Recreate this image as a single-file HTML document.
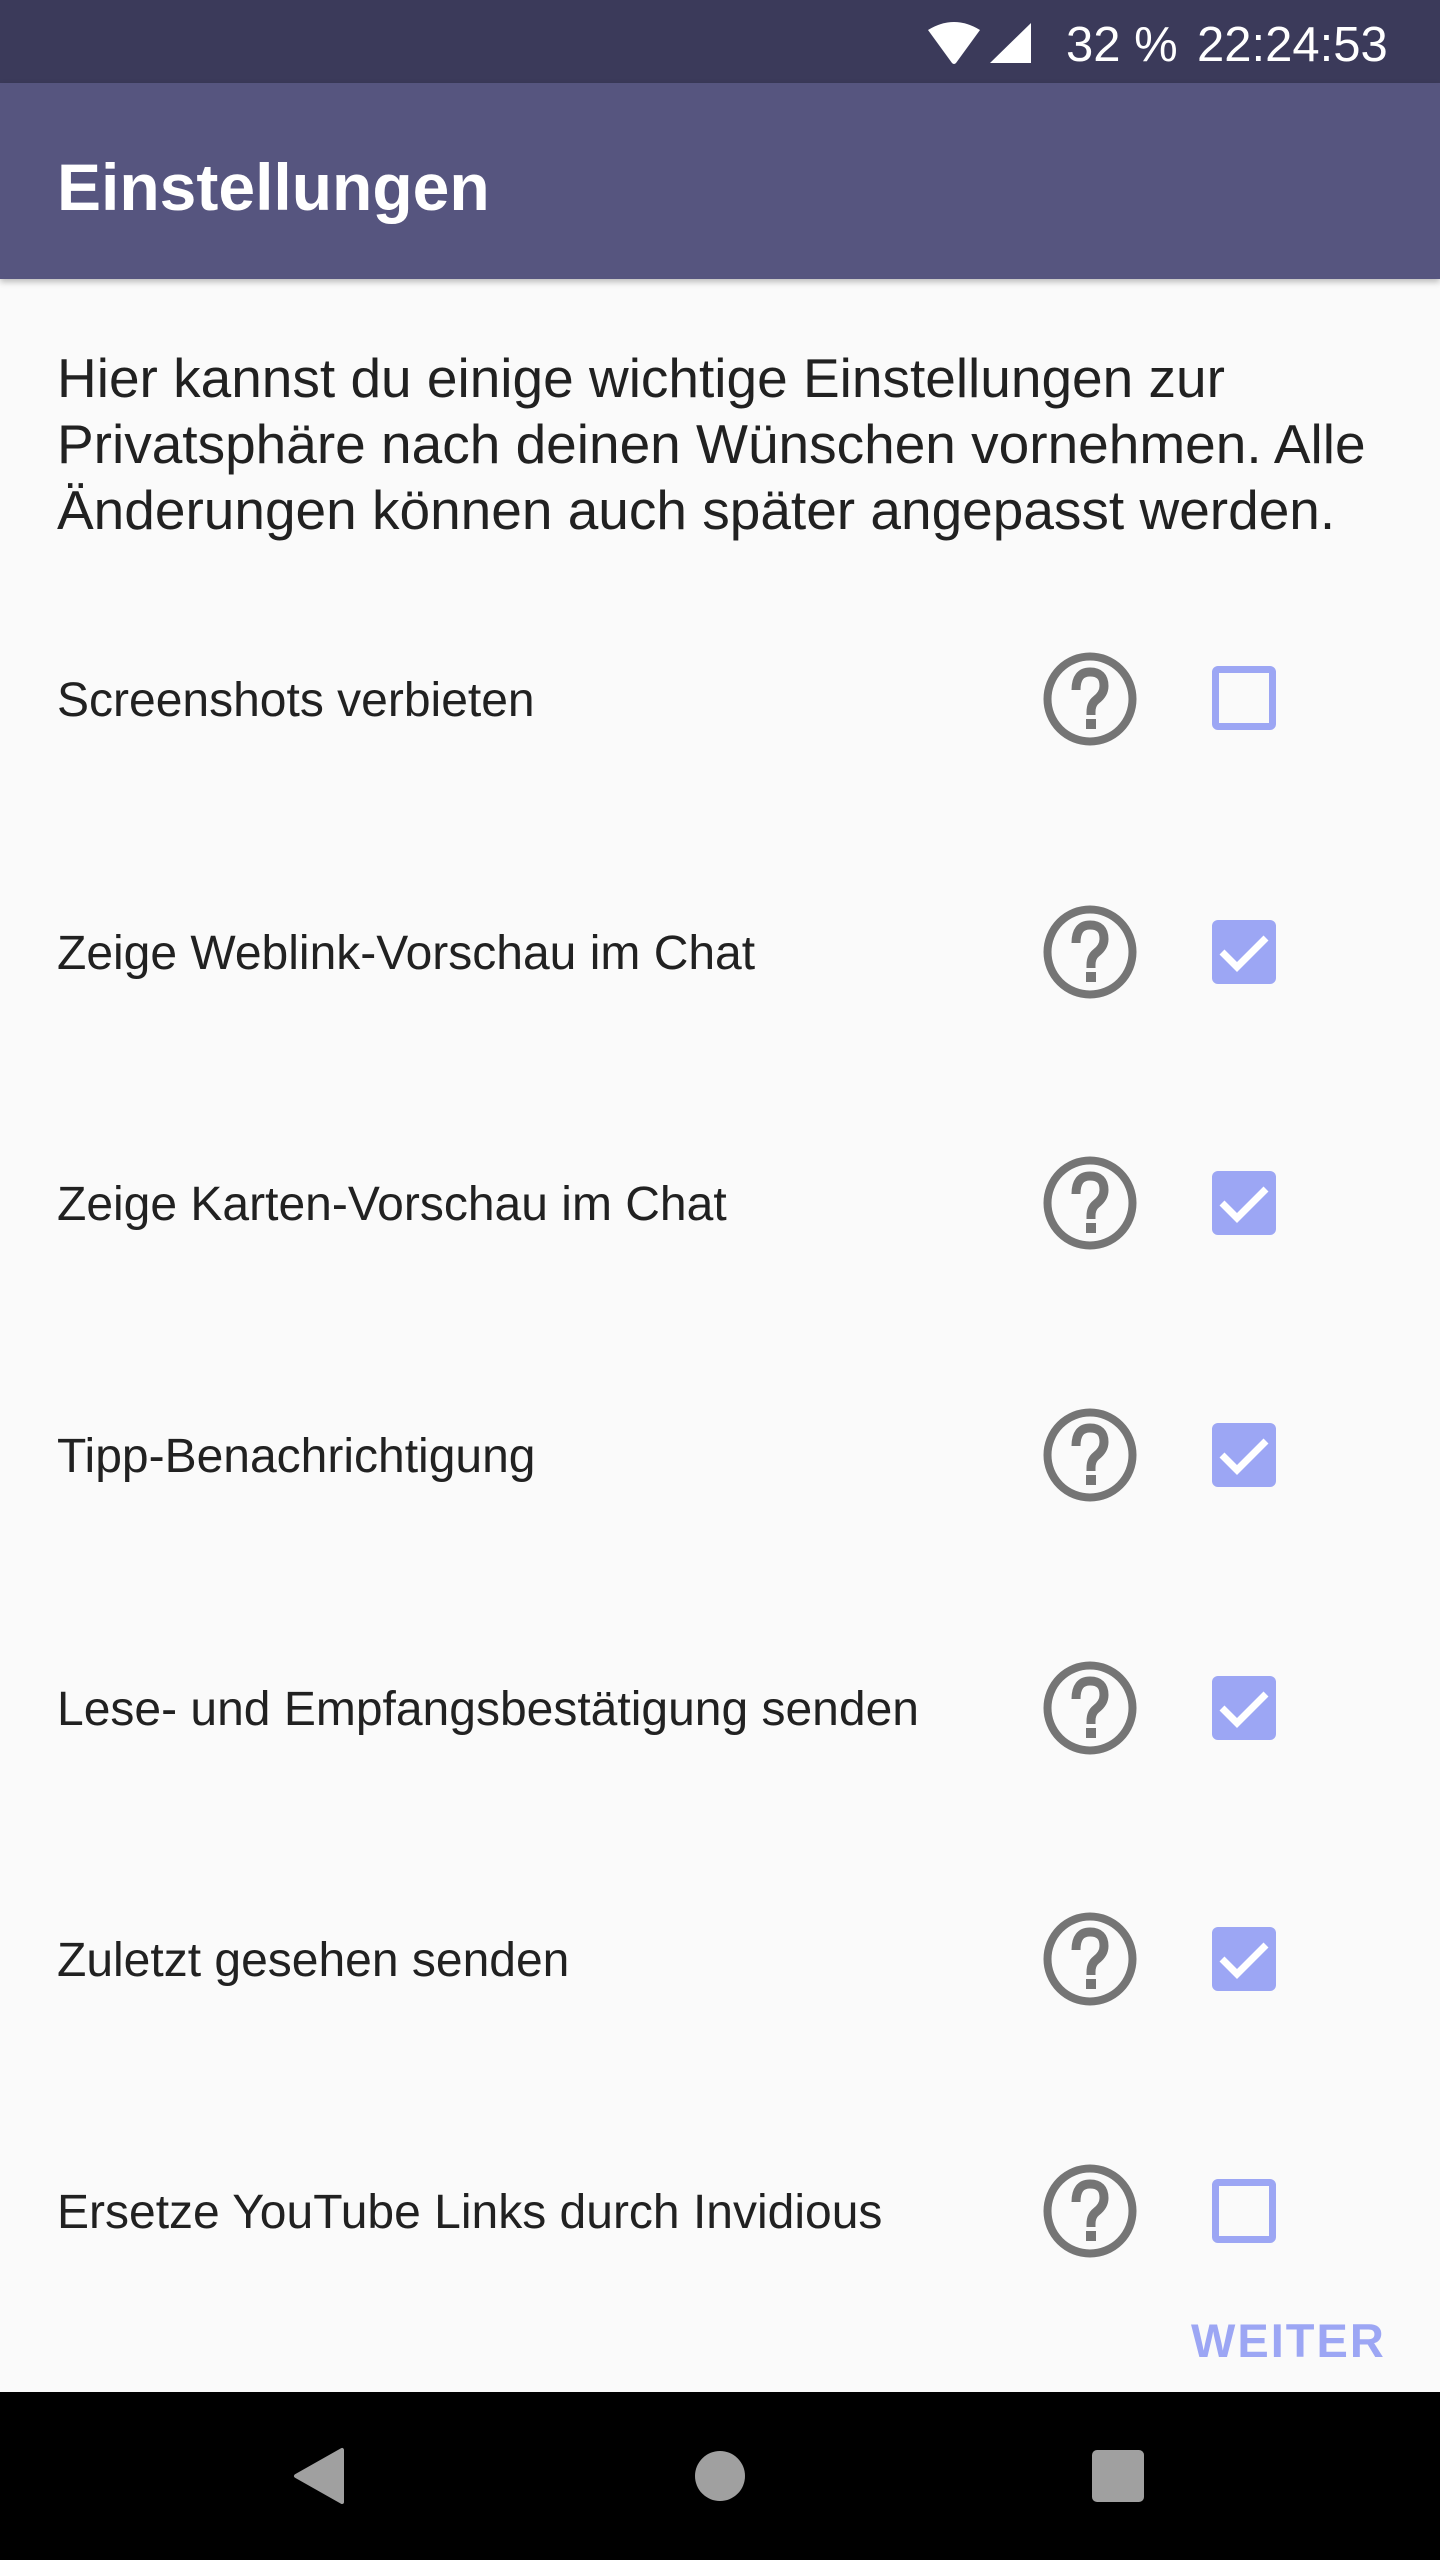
<!DOCTYPE html>
<html><head><meta charset="utf-8"><style>
*{margin:0;padding:0;box-sizing:border-box}
body{width:1440px;height:2560px;background:#fafafa;font-family:"Liberation Sans",sans-serif;position:relative;overflow:hidden}
.sb{position:absolute;left:0;top:0;width:1440px;height:83px;background:#3b3a5a}
.ab{position:absolute;left:0;top:83px;width:1440px;height:196px;background:#56557f;box-shadow:0 3px 6px rgba(0,0,0,.25)}
.t{position:absolute;white-space:nowrap}
.lbl{position:absolute;left:57px;font-size:48px;color:#212121;line-height:1}
.help{position:absolute;left:1043px;width:94px;height:94px}
.cb{position:absolute;left:1212px;width:64px;height:64px;border-radius:6px}
.off{border:7px solid #9ca6f4}
.on{background:#9ca6f4}
.nav{position:absolute;left:0;top:2392px;width:1440px;height:168px;background:#000}
</style></head><body>
<div class="sb">
<svg style="position:absolute;left:926px;top:20px" width="56" height="45" viewBox="0 0 56 45"><path d="M2 10 Q28 -6 54 10 L30 43 Q28 45 26 43 Z" fill="#fff"/></svg>
<svg style="position:absolute;left:988px;top:21px" width="44" height="44" viewBox="0 0 44 44"><path d="M43 2 L43 42 L2 42 Z" fill="#fff"/></svg>
<div class="t" style="left:1066px;top:17px;font-size:49px;color:#fff">32 %</div>
<div class="t" style="left:1197px;top:17px;font-size:49px;color:#fff">22:24:53</div>
</div>
<div class="ab"><div class="t" style="left:57px;font-size:66px;font-weight:bold;color:#fff;line-height:1;top:71px">Einstellungen</div></div>
<div class="t" style="left:57px;top:345px;font-size:55px;line-height:66px;color:#212121">Hier kannst du einige wichtige Einstellungen zur<br>Privatsphäre nach deinen Wünschen vornehmen. Alle<br>Änderungen können auch später angepasst werden.</div>

<div class="lbl" style="top:677px">Screenshots verbieten</div>
<div class="lbl" style="top:930px">Zeige Weblink-Vorschau im Chat</div>
<div class="lbl" style="top:1181px">Zeige Karten-Vorschau im Chat</div>
<div class="lbl" style="top:1433px">Tipp-Benachrichtigung</div>
<div class="lbl" style="top:1686px">Lese- und Empfangsbestätigung senden</div>
<div class="lbl" style="top:1937px">Zuletzt gesehen senden</div>
<div class="lbl" style="top:2189px">Ersetze YouTube Links durch Invidious</div>

<svg width="0" height="0" style="position:absolute"><defs><g id="h"><circle cx="47" cy="47" r="42.5" fill="none" stroke="#757575" stroke-width="8"/><path d="M33 38 Q33 20 47 20 Q61 20 61 34 Q61 42 53 48 Q48 52 48 60 L48 63" fill="none" stroke="#757575" stroke-width="9"/><rect x="43" y="67" width="10" height="10" fill="#757575"/></g></defs></svg>

<svg class="help" style="top:652px" viewBox="0 0 94 94"><use href="#h"/></svg>
<svg class="help" style="top:905px" viewBox="0 0 94 94"><use href="#h"/></svg>
<svg class="help" style="top:1156px" viewBox="0 0 94 94"><use href="#h"/></svg>
<svg class="help" style="top:1408px" viewBox="0 0 94 94"><use href="#h"/></svg>
<svg class="help" style="top:1661px" viewBox="0 0 94 94"><use href="#h"/></svg>
<svg class="help" style="top:1912px" viewBox="0 0 94 94"><use href="#h"/></svg>
<svg class="help" style="top:2164px" viewBox="0 0 94 94"><use href="#h"/></svg>

<div class="cb off" style="top:666px"></div>
<svg class="cb on" style="top:920px" viewBox="0 0 64 64"><path d="M10 32 L25 47 L54 18" fill="none" stroke="#fff" stroke-width="7"/></svg>
<svg class="cb on" style="top:1171px" viewBox="0 0 64 64"><path d="M10 32 L25 47 L54 18" fill="none" stroke="#fff" stroke-width="7"/></svg>
<svg class="cb on" style="top:1423px" viewBox="0 0 64 64"><path d="M10 32 L25 47 L54 18" fill="none" stroke="#fff" stroke-width="7"/></svg>
<svg class="cb on" style="top:1676px" viewBox="0 0 64 64"><path d="M10 32 L25 47 L54 18" fill="none" stroke="#fff" stroke-width="7"/></svg>
<svg class="cb on" style="top:1927px" viewBox="0 0 64 64"><path d="M10 32 L25 47 L54 18" fill="none" stroke="#fff" stroke-width="7"/></svg>
<div class="cb off" style="top:2179px"></div>

<div class="t" style="left:1191px;top:2317px;font-size:47px;font-weight:bold;color:#9ca6f4;letter-spacing:2px;line-height:1">WEITER</div>

<div class="nav">
<svg style="position:absolute;left:290px;top:54px" width="56" height="60" viewBox="0 0 56 60"><path d="M52 4 L52 56 L6 30 Z" fill="#a0a0a0" stroke="#a0a0a0" stroke-width="4" stroke-linejoin="round"/></svg>
<svg style="position:absolute;left:694px;top:58px" width="52" height="52"><circle cx="26" cy="26" r="25" fill="#a0a0a0"/></svg>
<svg style="position:absolute;left:1091px;top:57px" width="54" height="54"><rect x="1" y="1" width="52" height="52" rx="5" fill="#a0a0a0"/></svg>
</div>
</body></html>
